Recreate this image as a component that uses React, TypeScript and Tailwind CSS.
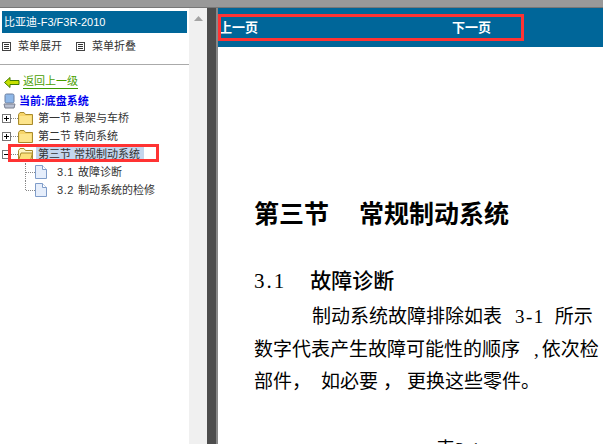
const cjk = "font-['Liberation_Sans','Noto_Sans_CJK_SC',sans-serif]"
const serif = "font-['Liberation_Serif','Noto_Sans_CJK_SC',serif]"

function MenuIcon() {
  return (
    <svg width="9" height="9" viewBox="0 0 9 9" className="shrink-0">
      <rect x="0.5" y="0.5" width="8" height="8" fill="#fff" stroke="#444" />
      <path d="M2 2.500h5M2 4.500h5M2 6.500h5" stroke="#333" />
    </svg>
  )
}

function Folder({ open }: { open?: boolean }) {
  return (
    <svg width="15" height="13" viewBox="0 0 15 13" className="shrink-0">
      <path d="M.5 2.500 2 .5h4l1.500 2h7v10H.5Z" fill={open ? '#fff6c4' : '#f6d469'} stroke="#a88b2c" />
      {open ? (
        <path d="M.5 12.500 3 5h11.500L12.500 12.500Z" fill="#fbe07a" stroke="#a88b2c" />
      ) : (
        <path d="M1.500 4h12v8h-12Z" fill="#fde58c" />
      )}
    </svg>
  )
}

function Doc() {
  return (
    <svg width="12" height="14" viewBox="0 0 12 14" className="shrink-0">
      <path d="M.5.5h7l4 4v9H.5Z" fill="#e6eefb" stroke="#7f9cc9" />
      <path d="M7.500.5v4h4" fill="#fff" stroke="#7f9cc9" />
    </svg>
  )
}

function Toggle({ minus }: { minus?: boolean }) {
  return (
    <svg width="9" height="9" viewBox="0 0 9 9" className="shrink-0">
      <rect x="0.5" y="0.5" width="8" height="8" fill="#fff" stroke="#777" />
      <path d={minus ? 'M2 4.500h5' : 'M2 4.500h5M4.500 2v5'} stroke="#000" />
    </svg>
  )
}

function Section({ title, open }: { title: string; open?: boolean }) {
  return (
    <div className="flex h-[18px] items-center">
      <Toggle minus={open} />
      <span className="w-[7px] border-t border-dotted border-[#888]" />
      <Folder open={open} />
      <span className={`ml-[3px] pr-[4px] pl-[2px] text-[11px] leading-[15px] text-[#333] ${open ? 'bg-[#c3d6ee]' : ''}`}>{title}</span>
    </div>
  )
}

function Leaf({ num, title, last }: { num: string; title: string; last?: boolean }) {
  return (
    <div className="flex h-[18px] items-center">
      <span className={`w-0 border-l border-dotted border-[#888] ${last ? 'h-[9px] self-start' : 'h-[18px]'}`} />
      <span className="w-[9px] border-t border-dotted border-[#888]" />
      <Doc />
      <span className="ml-[10px] text-[11px] leading-[15px] text-[#333]">
        <span className="tracking-[0.6px]">{num}</span>
        <span className="ml-[4px]">{title}</span>
      </span>
    </div>
  )
}

export default function App() {
  return (
    <div className={`flex h-[444px] w-[603px] flex-col overflow-hidden bg-white ${cjk}`}>
      <div className="h-[8px] shrink-0 border-b border-[#777] bg-[#999]" />
      <div className="flex min-h-0 flex-1">
        {/* left tree */}
        <div className="relative w-[189px] shrink-0 pt-[3px]">
          <div className="mx-[2px] flex h-[22px] items-center bg-[#006699] px-[2px] text-[11px] text-white">比亚迪-F3/F3R-2010</div>
          <div className="flex h-[26px] items-center gap-[7px] pl-[2px] text-[11px] text-[#333]">
            <MenuIcon />
            <span>菜单展开</span>
            <span className="ml-[7px]"><MenuIcon /></span>
            <span>菜单折叠</span>
          </div>
          <div className="mt-[5px] border-t border-[#aaa]" />
          <div className="mt-[9px] flex h-[16px] items-center gap-[3px] pl-[4px]">
            <svg width="16" height="11" viewBox="0 0 16 11">
              <path d="M6 .5v3h9v4H6v3L.5 5.500Z" fill="#c6e000" stroke="#3f7a00" />
            </svg>
            <span className="border-b border-[#3a9a00] text-[11px] leading-[13px] text-[#4aa000]">返回上一级</span>
          </div>
          <div className="mt-[3px] flex h-[16px] items-center gap-[3px] pl-[3px]">
            <svg width="13" height="16" viewBox="0 0 13 16">
              <rect x="2" y="1" width="9" height="9" rx="1.500" fill="#8fb8e8" stroke="#6b7fa0" />
              <path d="M1 11h11l-1 4H2Z" fill="#b8bfd0" stroke="#7a8090" />
            </svg>
            <span className="text-[11px] font-bold leading-[15px] text-[#0000ee]">当前:底盘系统</span>
          </div>
          <div className="pl-[2px]">
            <Section title="第一节 悬架与车桥" />
            <Section title="第二节 转向系统" />
            <Section title="第三节 常规制动系统" open />
            <div className="ml-[23px]">
              <Leaf num="3.1" title="故障诊断" />
              <Leaf num="3.2" title="制动系统的检修" last />
            </div>
          </div>
          <div className="absolute left-[8px] top-[136px] h-[18px] w-[151px] border-[3px] border-[#f33]" />
        </div>

        {/* scrollbar */}
        <div className="flex w-[18px] shrink-0 justify-center bg-[#f0f0f0] pt-[8px]">
          <svg width="9" height="5" viewBox="0 0 9 5">
            <path d="M4.500 0 9 5H0Z" fill="#a3a3a3" />
          </svg>
        </div>
        <div className="w-[9px] shrink-0 bg-[#4d4d4d]" />

        {/* page */}
        <div className="relative min-w-0 flex-1 overflow-hidden border-l-2 border-[#888]">
          <div className="flex h-[39px] items-center bg-[#006699] pl-[1px] text-[13px] font-bold text-white">
            <span className="w-[233px]">上一页</span>
            <span>下一页</span>
          </div>
          <div className="absolute left-[0px] top-[6px] h-[27px] w-[306px] border-[3px] border-[#f33]" />
          <div className={`whitespace-nowrap pl-[36px] text-black ${serif}`}>
            <div className="mt-[151px] text-[25px] font-bold leading-[34px]">第三节<span className="ml-[30px]">常规制动系统</span></div>
            <div className="mt-[35px] text-[21px] font-medium leading-[28px]"><span className="tracking-[2px]">3.1</span><span className="ml-[24px]">故障诊断</span></div>
            <div className="mt-[6px] pl-[58px] text-[19px] leading-[32.5px]">制动系统故障排除如表<span className="ml-[13px] tracking-[1.5px]">3-1</span><span className="ml-[10px]">所示</span></div>
            <div className="text-[19px] leading-[32.5px]">数字代表产生故障可能性的顺序<span className="ml-[14px]">,</span><span className="ml-[3px]">依次检</span></div>
            <div className="text-[19px] leading-[32.5px]">部件，<span className="ml-[10px]">如必要</span><span className="ml-[5px]">，</span><span className="ml-[5px]">更换这些零件。</span></div>
            <div className="mt-[35px] pl-[182px] text-[19px] leading-[32.5px]">表3-1</div>
          </div>
        </div>
      </div>
    </div>
  )
}
